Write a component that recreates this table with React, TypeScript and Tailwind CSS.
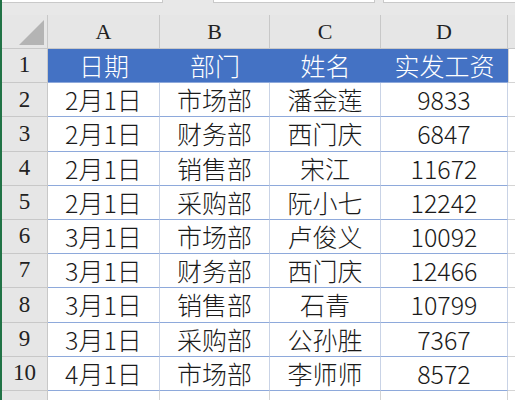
const cols = ["A", "B", "C", "D"];
const widths = ["w-[112px]", "w-[110px]", "w-[111px]", "w-[127px]"];

const rows = [
  ["2月1日", "市场部", "潘金莲", "9833"],
  ["2月1日", "财务部", "西门庆", "6847"],
  ["2月1日", "销售部", "宋江", "11672"],
  ["2月1日", "采购部", "阮小七", "12242"],
  ["3月1日", "市场部", "卢俊义", "10092"],
  ["3月1日", "财务部", "西门庆", "12466"],
  ["3月1日", "销售部", "石青", "10799"],
  ["3月1日", "采购部", "公孙胜", "7367"],
  ["4月1日", "市场部", "李师师", "8572"],
];

const cjk = "font-['Noto_Sans_CJK_SC','Noto_Sans',sans-serif] font-light";
const serif = "font-['Liberation_Serif','DejaVu_Serif',serif]";

function RowNum({ n }: { n?: number }) {
  return (
    <div
      className={`w-[46px] shrink-0 h-full flex items-center justify-center bg-[#e6e6e6] border-r border-b border-[#c8c8c8] text-[23px] text-[#222] ${serif}`}
    >
      {n}
    </div>
  );
}

export default function App() {
  return (
    <div className="w-[515px] h-[400px] overflow-hidden bg-white flex">
      <div className="w-[2px] shrink-0 bg-[#217346]" />
      <div className="flex-1 flex flex-col">
        {/* top strip */}
        <div className="h-[15px] shrink-0 bg-[#e8e8e8] flex items-start">
          <div className="w-[161px] h-[3px] bg-white border-b border-r border-[#c9c9c9]" />
          <div className="w-[50px]" />
          <div className="w-[162px] h-[3px] bg-white border-b border-x border-[#c9c9c9]" />
          <div className="w-[8px]" />
          <div className="flex-1 h-[3px] bg-white border-b border-l border-[#c9c9c9]" />
        </div>

        {/* column letters */}
        <div className="h-[34px] shrink-0 flex bg-[#e6e6e6]">
          <div className="w-[46px] shrink-0 h-full border-r border-b border-[#c8c8c8] flex items-end justify-end pr-[3px] pb-[3px]">
            <svg width="25" height="25" viewBox="0 0 25 25">
              <polygon points="25,0 25,25 0,25" fill="#b4b4b4" />
            </svg>
          </div>
          {cols.map((c, i) => (
            <div
              key={c}
              className={`${widths[i]} shrink-0 h-full border-r border-b border-[#c8c8c8] flex items-center justify-center text-[22px] text-[#222] ${serif}`}
            >
              {c}
            </div>
          ))}
          <div className="flex-1 h-full border-b border-[#c8c8c8]" />
        </div>

        {/* header row */}
        <div className="h-[34.2px] shrink-0 flex">
          <RowNum n={1} />
          {["日期", "部门", "姓名", "实发工资"].map((t, i) => (
            <div
              key={t}
              className={`${widths[i]} shrink-0 h-full bg-[#4472c4] border-b border-[#8ea9db] flex items-center justify-center text-[25px] leading-none text-white ${cjk}`}
            >
              {t}
            </div>
          ))}
          <div className="flex-1 h-full border-l border-b border-[#d4d4d4]" />
        </div>

        {rows.map((r, ri) => (
          <div key={ri} className="h-[34.2px] shrink-0 flex">
            <RowNum n={ri + 2} />
            {r.map((t, i) => (
              <div
                key={i}
                className={`${widths[i]} shrink-0 h-full border-b border-r border-b-[#8ea9db] border-r-[#c9d3e6] flex items-center justify-center text-[25px] leading-none text-[#1a1a1a] ${cjk}`}
              >
                {t}
              </div>
            ))}
            <div className="flex-1 h-full border-b border-[#d4d4d4]" />
          </div>
        ))}

        <div className="h-[34px] shrink-0 flex">
          <RowNum />
          {widths.map((w, i) => (
            <div key={i} className={`${w} shrink-0 h-full border-r border-[#d4d4d4]`} />
          ))}
        </div>
      </div>
    </div>
  );
}
